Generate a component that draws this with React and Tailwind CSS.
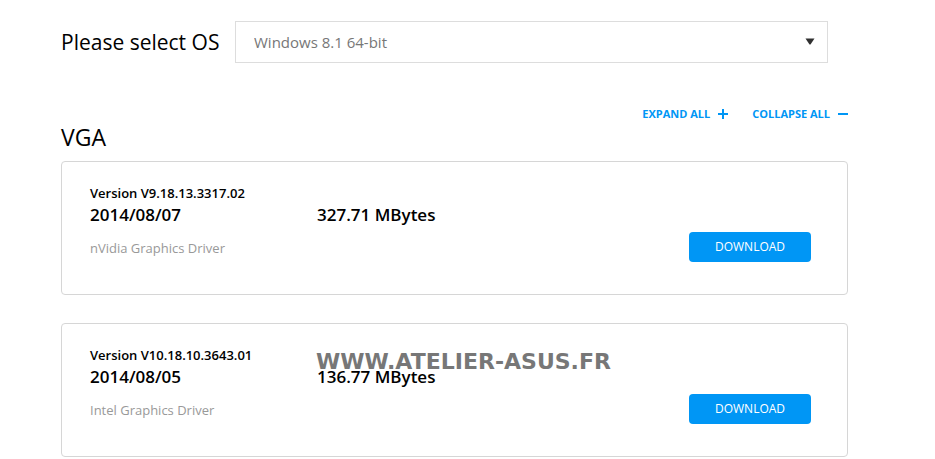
import { useState } from 'react';

const drivers = [
  { version: 'V9.18.13.3317.02', date: '2014/08/07', size: '327.71 MBytes', name: 'nVidia Graphics Driver' },
  { version: 'V10.18.10.3643.01', date: '2014/08/05', size: '136.77 MBytes', name: 'Intel Graphics Driver', watermark: 'WWW.ATELIER-ASUS.FR' },
];

const DriverCard = ({ driver }) => (
  <article className="relative flex items-start justify-between rounded border border-[#d6d6d6] pt-[23px] pr-9 pb-8 pl-7">
    <div className="min-w-0 flex-1">
      <p className="text-[13px] leading-4 font-semibold">Version {driver.version}</p>
      <div className="flex text-[17px] leading-7 font-semibold">
        <p className="w-[227px]">{driver.date}</p>
        <p>{driver.size}</p>
      </div>
      <p className="mt-[9px] text-[13px] leading-5 text-[#999]">{driver.name}</p>
    </div>
    <button type="button" className="mt-[47px] h-[30px] w-[122px] shrink-0 cursor-pointer rounded bg-[#0096f5] text-[12px] text-white">
      DOWNLOAD
    </button>
    {driver.watermark && (
      <span className="pointer-events-none absolute top-7 left-[254px] font-['DejaVu_Sans'] text-[22px] leading-5 font-bold whitespace-nowrap text-[#777]">
        {driver.watermark}
      </span>
    )}
  </article>
);

const App = () => {
  const [os, setOs] = useState('Windows 8.1 64-bit');

  return (
    <main className="bg-white pt-[21px] pr-[87px] pl-[61px] font-['Open_Sans',sans-serif] text-black">
      {/* OS selector */}
      <div className="mr-5 flex items-center">
        <label htmlFor="os" className="w-[174px] shrink-0 text-[21px] leading-7">Please select OS</label>
        <div className="relative min-w-0 flex-1">
          <select
            id="os"
            value={os}
            onChange={(e) => setOs(e.target.value)}
            className="block h-[42px] w-full appearance-none border border-[#ddd] bg-white pr-8 pl-[18px] text-[15px] text-[#777]"
          >
            <option>Windows 8.1 64-bit</option>
          </select>
          <svg className="pointer-events-none absolute top-[17px] right-[13px] h-[7px] w-[10px]" viewBox="0 0 10 7" fill="#303030">
            <path d="M0.5 0.5h9L5.5 6.5h-1z" />
          </svg>
        </div>
      </div>

      {/* Section header */}
      <div className="mt-[41px] flex h-[57px] items-start justify-between">
        <h2 className="mt-[17px] text-[23px] leading-8">VGA</h2>
        <div className="flex gap-6 text-[11px] leading-5 font-bold text-[#0096f5]">
          <button type="button" className="flex cursor-pointer items-center gap-2">
            EXPAND ALL
            <svg className="h-[10px] w-[10px]" viewBox="0 0 10 10" fill="currentColor">
              <path d="M4 0h2v4h4v2H6v4H4V6H0V4h4z" />
            </svg>
          </button>
          <button type="button" className="flex cursor-pointer items-center gap-2">
            COLLAPSE ALL
            <svg className="h-[10px] w-[10px]" viewBox="0 0 10 10" fill="currentColor">
              <path d="M0 4h10v2H0z" />
            </svg>
          </button>
        </div>
      </div>

      {/* Drivers */}
      <div className="flex flex-col gap-7">
        {drivers.map((driver) => (
          <DriverCard key={driver.version} driver={driver} />
        ))}
      </div>
    </main>
  );
};

export default App;
